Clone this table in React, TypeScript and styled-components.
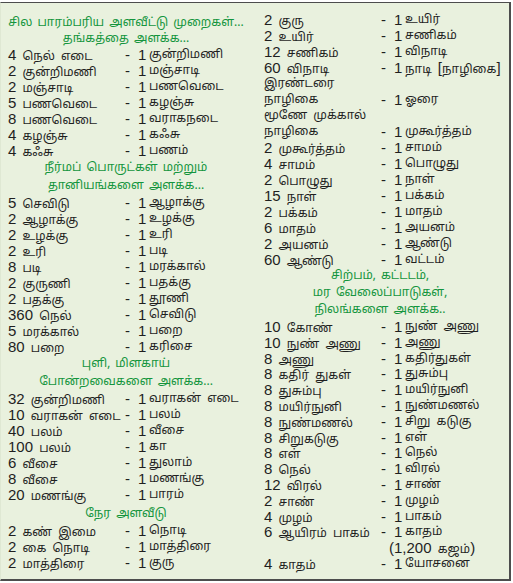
import React from 'react';
import styled, { createGlobalStyle } from 'styled-components';

const GlobalStyle = createGlobalStyle`
  html, body {
    margin: 0;
    padding: 0;
    background: #ffffff;
  }
  body {
    font-family: 'Noto Sans Tamil', 'Lohit Tamil', 'Noto Sans', 'DejaVu Sans', sans-serif;
  }
`;

const Sheet = styled.div`
  box-sizing: border-box;
  margin-top: 2px;
  width: 511px;
  height: 579px;
  background: #e9f1de;
  border-top: 1px solid #4d4d4d;
  border-right: 2px solid #4d4d4d;
  border-bottom: 2px solid #4d4d4d;
  border-left: 1px solid #dfe8d3;
  display: grid;
  grid-template-columns: 256px 1fr;
  color: #1f1f1f;
  overflow: hidden;
`;

const Column = styled.div`
  padding: 9px 0 0 7px;
  display: flex;
  flex-direction: column;
`;

const Heading = styled.div<{ $lh: number; $pad?: number }>`
  color: #14953d;
  font-size: 12px;
  line-height: ${(p) => p.$lh}px;
  padding-top: ${(p) => p.$pad ?? 0}px;
  text-align: center;
  word-spacing: 2px;
  margin-left: -7px;
  padding-right: 6px;
  white-space: nowrap;
`;

const Row = styled.div<{ $h?: number }>`
  display: grid;
  grid-template-columns: 117px 13px 11px 1fr;
  height: ${(p) => p.$h ?? 16}px;
  line-height: 16px;
  font-size: 12px;
  white-space: nowrap;
  word-spacing: 3px;
  flex-shrink: 0;
`;

const Num = styled.span`
  font-family: 'Liberation Sans', Arial, sans-serif;
  font-size: 15px;
  line-height: 16px;
`;

const Cell = styled.span<{ $shift?: boolean }>`
  line-height: 16px;
  margin-left: ${(p) => (p.$shift ? '-16px' : '0')};
`;

type Entry = [string | null, string | null, string | null, string | null];

// digits and brackets in a Latin face, the rest in the Tamil one
const mixed = (s: string) =>
  s.split(/([0-9(),[\]]+)/).map((part, i) =>
    /^[0-9(),[\]]+$/.test(part) ? <Num key={i}>{part}</Num> : <React.Fragment key={i}>{part}</React.Fragment>
  );

const Line = ({ e, h }: { e: Entry; h?: number }) => {
  const [name, dash, one, value] = e;
  const note = !name && !dash;
  return (
    <Row $h={h}>
      <Cell>{name ? mixed(name) : null}</Cell>
      <Num>{dash ?? ''}</Num>
      <Num>{one ?? ''}</Num>
      <Cell $shift={note}>{value ? mixed(value) : null}</Cell>
    </Row>
  );
};

const r = (a: string, b: string): Entry => [a, '-', '1', b];

const gold: Entry[] = [
  r('4 நெல் எடை', 'குன்றிமணி'),
  r('2 குன்றிமணி', 'மஞ்சாடி'),
  r('2 மஞ்சாடி', 'பணவெடை'),
  r('5 பணவெடை', 'கழஞ்சு'),
  r('8 பணவெடை', 'வராகநடை'),
  r('4 கழஞ்சு', 'கஃசு'),
  r('4 கஃசு', 'பணம்'),
];

const grain: Entry[] = [
  r('5 செவிடு', 'ஆழாக்கு'),
  r('2 ஆழாக்கு', 'உழக்கு'),
  r('2 உழக்கு', 'உரி'),
  r('2 உரி', 'படி'),
  r('8 படி', 'மரக்கால்'),
  r('2 குருணி', 'பதக்கு'),
  r('2 பதக்கு', 'தூணி'),
  r('360 நெல்', 'செவிடு'),
  r('5 மரக்கால்', 'பறை'),
  r('80 பறை', 'கரிசை'),
];

const tamarind: Entry[] = [
  r('32 குன்றிமணி', 'வராகன் எடை'),
  r('10 வராகன் எடை', 'பலம்'),
  r('40 பலம்', 'வீசை'),
  r('100 பலம்', 'கா'),
  r('6 வீசை', 'துலாம்'),
  r('8 வீசை', 'மணங்கு'),
  r('20 மணங்கு', 'பாரம்'),
];

const timeA: Entry[] = [
  r('2 கண் இமை', 'நொடி'),
  r('2 கை நொடி', 'மாத்திரை'),
  r('2 மாத்திரை', 'குரு'),
];

const timeB: Entry[] = [
  r('2 குரு', 'உயிர்'),
  r('2 உயிர்', 'சணிகம்'),
  r('12 சணிகம்', 'விநாடி'),
  r('60 விநாடி', 'நாடி [நாழிகை]'),
  ['இரண்டரை', null, null, null],
  r('நாழிகை', 'ஓரை'),
  ['மூணே முக்கால்', null, null, null],
  r('நாழிகை', 'முகூர்த்தம்'),
  r('2 முகூர்த்தம்', 'சாமம்'),
  r('4 சாமம்', 'பொழுது'),
  r('2 பொழுது', 'நாள்'),
  r('15 நாள்', 'பக்கம்'),
  r('2 பக்கம்', 'மாதம்'),
  r('6 மாதம்', 'அயனம்'),
  r('2 அயனம்', 'ஆண்டு'),
  r('60 ஆண்டு', 'வட்டம்'),
];

const land: Entry[] = [
  r('10 கோண்', 'நுண் அணு'),
  r('10 நுண் அணு', 'அணு'),
  r('8 அணு', 'கதிர்துகள்'),
  r('8 கதிர் துகள்', 'துசும்பு'),
  r('8 துசும்பு', 'மயிர்நுனி'),
  r('8 மயிர்நுனி', 'நுண்மணல்'),
  r('8 நுண்மணல்', 'சிறு கடுகு'),
  r('8 சிறுகடுகு', 'எள்'),
  r('8 எள்', 'நெல்'),
  r('8 நெல்', 'விரல்'),
  r('12 விரல்', 'சாண்'),
  r('2 சாண்', 'முழம்'),
  r('4 முழம்', 'பாகம்'),
  r('6 ஆயிரம் பாகம்', 'காதம்'),
  [null, null, null, '(1,200 கஜம்)'],
  r('4 காதம்', 'யோசனை'),
];

const List = ({ items, h }: { items: Entry[]; h?: number }) => (
  <>
    {items.map((e, i) => (
      <Line key={i} e={e} h={h} />
    ))}
  </>
);

const App = () => {
  return (
    <>
      <GlobalStyle />
      <Sheet>
        <Column>
          <Heading $lh={16} $pad={3}>
            சில பாரம்பரிய அளவீட்டு முறைகள்...
            <br />
            தங்கத்தை அளக்க...
          </Heading>
          <List items={gold} />
          <Heading $lh={18}>
            நீர்மப் பொருட்கள் மற்றும்
            <br />
            தானியங்களை அளக்க...
          </Heading>
          <List items={grain} />
          <Heading $lh={18}>
            புளி, மிளகாய்
            <br />
            போன்றவைகளை அளக்க...
          </Heading>
          <List items={tamarind} />
          <Heading $lh={18} $pad={2}>
            நேர அளவீடு
          </Heading>
          <List items={timeA} />
        </Column>
        <Column>
          <List items={timeB} />
          <Heading $lh={17}>
            சிற்பம், கட்டடம்,
            <br />
            மர வேலைப்பாடுகள்,
            <br />
            நிலங்களை அளக்க..
          </Heading>
          <List items={land} h={15.8} />
        </Column>
      </Sheet>
    </>
  );
};

export default App;
